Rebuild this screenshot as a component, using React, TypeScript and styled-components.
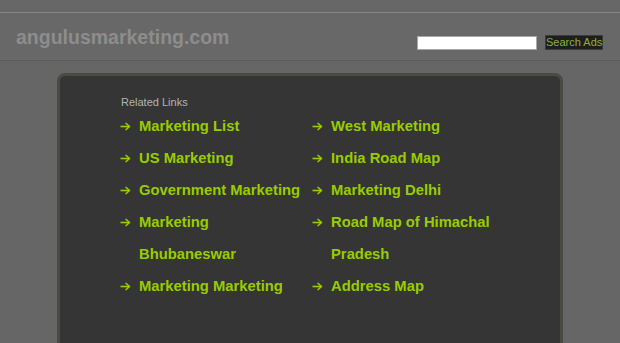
import React from "react";
import styled, { createGlobalStyle } from "styled-components";

const GlobalStyle = createGlobalStyle`
  html, body {
    margin: 0;
    padding: 0;
    background: #666666;
    font-family: "Liberation Sans", Arial, sans-serif;
    overflow: hidden;
  }
`;

const TopStrip = styled.div`
  height: 12px;
  background: #676767;
  border-bottom: 1px solid #878787;
`;

const Header = styled.header`
  height: 47px;
  display: flex;
  align-items: center;
  justify-content: space-between;
  padding: 0 17px 0 16px;
  background: #686868;
  border-bottom: 1px solid #5b5b5b;
`;

const Title = styled.h1`
  margin: 0;
  font-size: 19.5px;
  font-weight: bold;
  color: #8d8d8d;
  line-height: 1;
  position: relative;
  top: 1px;
`;

const SearchForm = styled.form`
  display: flex;
  align-items: center;
  gap: 8px;
  margin: 12px 0 0;
`;

const SearchInput = styled.input`
  box-sizing: border-box;
  width: 120px;
  height: 14px;
  margin: 0;
  padding: 0 2px;
  border: 1px solid #a8a8a8;
  background: #ffffff;
  outline: none;
`;

const SearchButton = styled.button`
  box-sizing: border-box;
  height: 15px;
  width: 58px;
  margin: 0;
  padding: 0;
  border: 1px solid #3c3c3c;
  background: #1e1e1e;
  color: #8db03e;
  font-family: "Liberation Sans", Arial, sans-serif;
  font-size: 11px;
  line-height: 13px;
  white-space: nowrap;
  cursor: pointer;
`;

const Panel = styled.main`
  box-sizing: border-box;
  width: 506px;
  min-height: 320px;
  margin: 12px auto 0;
  background: #353535;
  border: 3px solid #4b4b44;
  border-radius: 8px;
  padding: 20px 0 0 61px;
`;

const SectionLabel = styled.div`
  font-size: 11px;
  line-height: 13px;
  color: #b4b4b4;
`;

const LinkGrid = styled.ul`
  list-style: none;
  margin: 1px 0 0;
  padding: 0;
  display: grid;
  grid-template-columns: repeat(2, 185px);
  column-gap: 7px;
`;

const LinkItem = styled.li`
  display: flex;
  align-items: flex-start;
  color: #99cc00;
`;

const ArrowBox = styled.span`
  flex: 0 0 18px;
  height: 32px;
  display: flex;
  align-items: center;
  margin-left: -1px;
  margin-right: 1px;
`;

const LinkText = styled.a`
  font-size: 14.8px;
  font-weight: bold;
  line-height: 32px;
  color: #99cc00;
  text-decoration: none;
`;

const Arrow = () => (
  <svg width="11" height="9" viewBox="0 0 11 9" fill="none">
    <path d="M0.5 4.5 H9.6" stroke="currentColor" strokeWidth="1.6" />
    <path d="M5.6 1 L9.4 4.5 L5.6 8" stroke="currentColor" strokeWidth="1.6" />
  </svg>
);

const links = [
  "Marketing List",
  "West Marketing",
  "US Marketing",
  "India Road Map",
  "Government Marketing",
  "Marketing Delhi",
  "Marketing Bhubaneswar",
  "Road Map of Himachal Pradesh",
  "Marketing Marketing",
  "Address Map",
];

export default function App() {
  return (
    <>
      <GlobalStyle />
      <TopStrip />
      <Header>
        <Title>angulusmarketing.com</Title>
        <SearchForm onSubmit={(e) => e.preventDefault()}>
          <SearchInput type="text" />
          <SearchButton type="submit">Search Ads</SearchButton>
        </SearchForm>
      </Header>
      <Panel>
        <SectionLabel>Related Links</SectionLabel>
        <LinkGrid>
          {links.map((l) => (
            <LinkItem key={l}>
              <ArrowBox>
                <Arrow />
              </ArrowBox>
              <LinkText href="#">{l}</LinkText>
            </LinkItem>
          ))}
        </LinkGrid>
      </Panel>
    </>
  );
}
